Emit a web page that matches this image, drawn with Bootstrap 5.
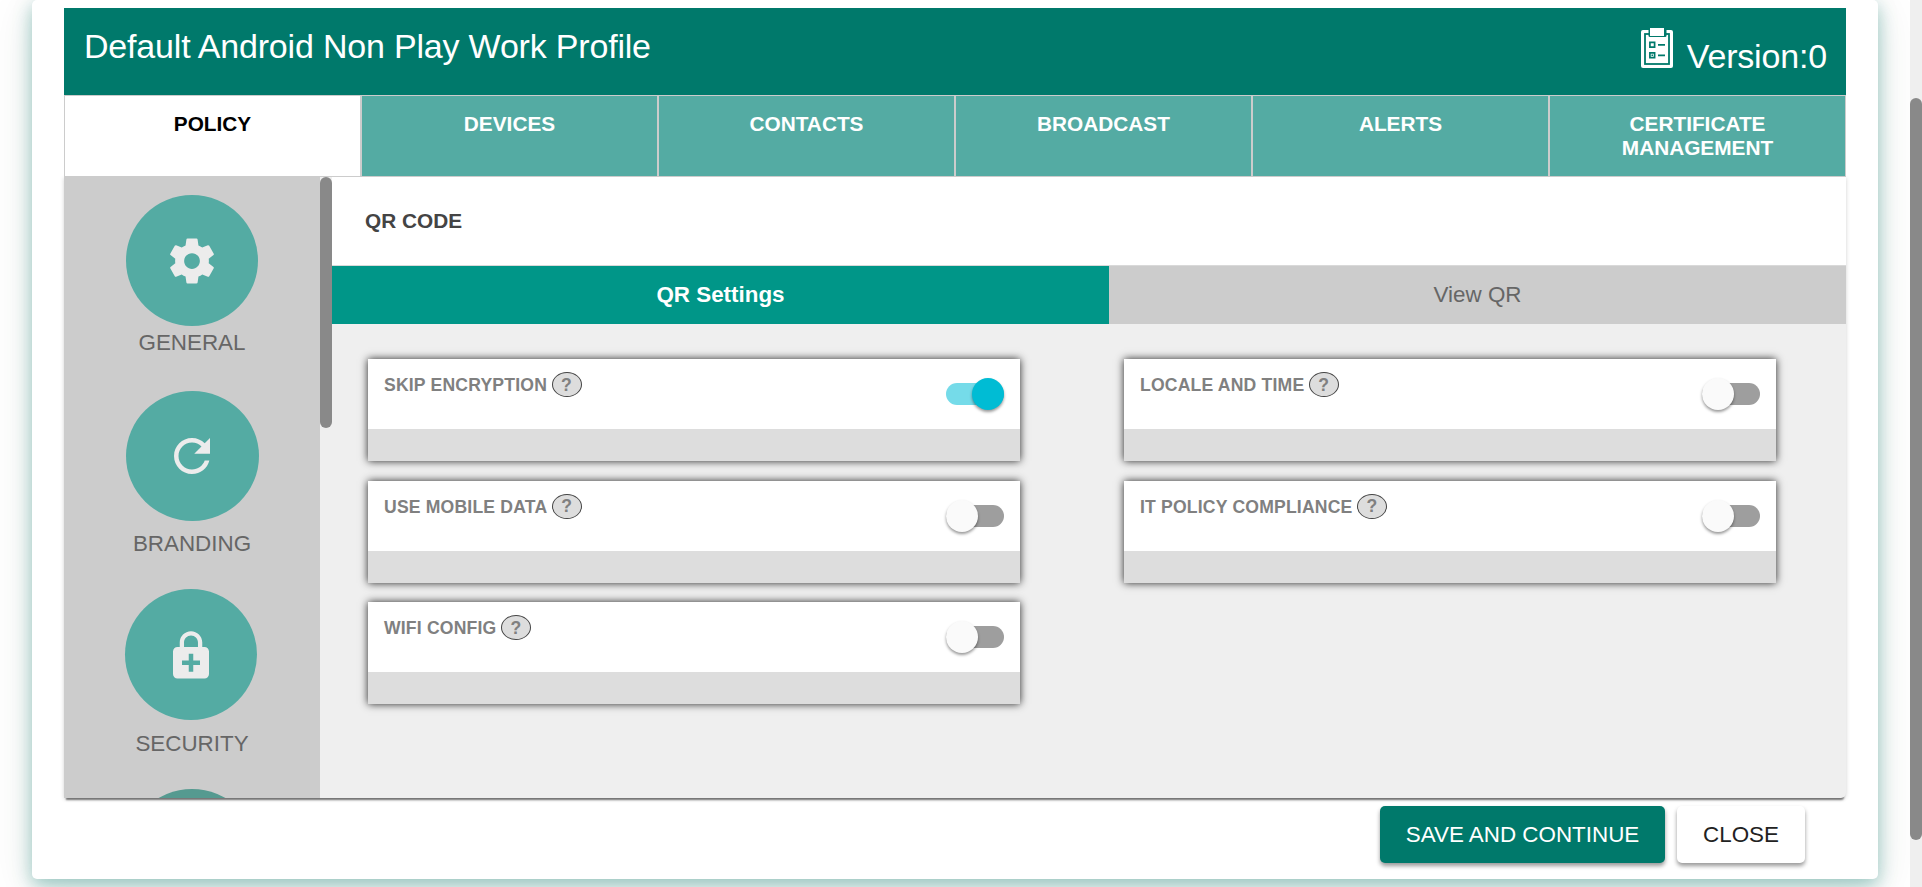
<!DOCTYPE html>
<html lang="en">
<head>
<meta charset="utf-8">
<title>Default Android Non Play Work Profile</title>
<link href="https://cdn.jsdelivr.net/npm/bootstrap@5.3.0/dist/css/bootstrap.min.css" rel="stylesheet">
<style>
body{font-family:"Liberation Sans",Arial,sans-serif;height:887px;overflow:hidden;background:#fff;color:#444}
.page-area{flex:1;height:887px;padding:0 32px;overflow:hidden}
.sheet{height:879px;padding:8px 32px 0;border-radius:5px;background:#fff;box-shadow:0 6px 18px rgba(0,121,107,.36),0 8px 44px rgba(0,60,50,.13)}
.title-bar{height:87px;background:#00796b;color:#fff;padding:0 19px 0 20px}
.title-bar h1{font-size:34px;line-height:40px;margin:18px 0 0;font-weight:400;letter-spacing:-.19px}
.version{font-size:34px;line-height:40px;margin-top:28px;letter-spacing:-.17px}
.clipboard{width:32px;height:41px;margin:19px 14px 0 0}
.main-tabs{height:82px}
.main-tabs .nav-link{flex:1 1 0;border:1px solid #ccc;border-radius:0;background:#54aba3;color:#fff;font-weight:700;font-size:20.8px;line-height:24px;padding:16px 40px 0;text-align:center}
.main-tabs .nav-link.active{background:#fff;color:#000}
.work{height:621px;border-radius:0 0 5px 0;box-shadow:0 4px 2px -2px rgba(0,0,0,.5),0 1px 4px rgba(0,0,0,.18);background:#efefef}
.side{width:256px;background:#ccc;overflow:hidden;padding-top:18px;color:#666;font-size:22.4px;line-height:26px}
.side-item{height:196px}
.side-item.branding{height:198px}
.side-item.security{height:200px}
.disc{width:132px;height:131px;border-radius:50%;background:#54aba3}
.branding .disc{width:133px;height:130px}
.disc svg{width:54px;height:54px;fill:#ececec}
.security .disc{margin-right:2px}
.security svg{margin-top:2px}
.disc.dim{background:#559a90}
.track{width:12px;background:#efefef}
.thumb{width:12px;border-radius:6px;background:#898989}
.heading{height:89px;border-bottom:1px solid #d9d9d9;background:#fff;padding:32px 0 0 33px;font-size:20.8px;line-height:24px;font-weight:700;margin:0}
.sub-tabs{height:58px;font-size:22.4px;background:#ccc;color:#666}
.sub-tabs .on{width:777px;background:#009688;color:#fff;font-weight:700}
.option-grid{padding:35px 70px 0 36px;display:grid;grid-template-columns:652px 652px;column-gap:104px;row-gap:19.5px}
.option{height:102px;background:#fff;box-shadow:0 0 8px rgba(0,0,0,.85);padding:14px 16px 0;border-bottom:32px solid #ddd}
.option h2{font-size:17.6px;line-height:24px;font-weight:700;color:#808080;margin:0;letter-spacing:.18px}
.help{width:30px;height:25px;border:1px solid #444;border-radius:50%;background:#ddd;margin:-1px 0 0 4.5px}
.switch{width:58px;height:32px;margin-top:5px}
.rail{width:58px;height:22px;border-radius:11px;background:#9e9e9e}
.knob{position:absolute;left:0;top:0;width:32px;height:32px;border-radius:50%;background:#fafafa;box-shadow:0 2px 3px rgba(0,0,0,.4)}
.switch.checked .rail{background:#75dbe9}
.switch.checked .knob{left:26px;background:#00bcd4}
.actions{padding:8px 41px 0 0;gap:12px}
.actions .btn{height:57px;border:0;border-radius:5px;font-size:22.4px;padding:0;box-shadow:0 3px 4px rgba(0,0,0,.4)}
.save{width:285px;background:#00796b!important;color:#fff!important}
.close-btn{width:128px;background:#fff;color:#222}
.page-track{width:12px;height:887px;background:#efefef;padding-top:98px}
</style>
</head>
<body class="d-flex">
<div class="page-area">
<main class="sheet">
<header class="title-bar d-flex justify-content-between">
<h1>Default Android Non Play Work Profile</h1>
<div class="d-flex">
<svg class="clipboard" viewBox="0 0 32 41"><rect x="0" y="3" width="32" height="38" rx="2" fill="#fff"/><rect x="4" y="7" width="24" height="30" fill="none" stroke="#00796b" stroke-width="1.8"/><rect x="7.500" y="0" width="18" height="10" rx="1.500" fill="#00796b"/><path fill="#fff" d="M9 1h14v8H9z"/><path fill="none" stroke="#00796b" stroke-width="1.700" d="M8.900 15.400h4.700v4.700H8.900zM8.900 25.900h4.700v4.700H8.900zM17 17.800h7M17 28.300h7"/><path fill="#00796b" d="M10.500 27.500h1.500v1.500h-1.500z"/></svg>
<span class="version">Version:0</span>
</div>
</header>
<nav class="nav main-tabs flex-nowrap">
<a class="nav-link active">POLICY</a><a class="nav-link">DEVICES</a><a class="nav-link">CONTACTS</a><a class="nav-link">BROADCAST</a><a class="nav-link">ALERTS</a><a class="nav-link">CERTIFICATE MANAGEMENT</a>
</nav>
<section class="work d-flex">
<aside class="side d-flex flex-column">
<div class="side-item d-flex flex-column align-items-center flex-shrink-0"><div class="disc d-flex align-items-center justify-content-center"><svg viewBox="0 0 24 24"><path d="M19.430 12.980c.04-.32.07-.64.07-.98s-.03-.66-.07-.98l2.110-1.650c.19-.15.24-.42.12-.64l-2-3.460c-.12-.22-.39-.3-.61-.22l-2.490 1c-.52-.4-1.080-.73-1.690-.98l-.38-2.650C14.460 2.180 14.250 2 14 2h-4c-.25 0-.46.18-.49.42l-.38 2.650c-.61.25-1.170.59-1.690.98l-2.490-1c-.23-.09-.49 0-.61.22l-2 3.460c-.13.22-.07.49.12.64l2.110 1.650c-.04.32-.07.65-.07.98s.03.66.07.98l-2.110 1.650c-.19.15-.24.42-.12.64l2 3.460c.12.22.39.3.61.22l2.490-1c.52.4 1.080.73 1.690.98l.38 2.650c.03.24.24.42.49.42h4c.25 0 .46-.18.49-.42l.38-2.650c.61-.25 1.170-.59 1.690-.98l2.490 1c.23.09.49 0 .61-.22l2-3.460c.12-.22.07-.49-.12-.64l-2.110-1.650zM12 15.500c-1.930 0-3.500-1.570-3.500-3.500s1.570-3.500 3.500-3.500 3.500 1.570 3.500 3.500-1.570 3.500-3.500 3.500z"/></svg></div><span class="mt-1">GENERAL</span></div>
<div class="side-item branding d-flex flex-column align-items-center flex-shrink-0"><div class="disc d-flex align-items-center justify-content-center"><svg viewBox="0 0 24 24"><path d="M17.650 6.350C16.200 4.900 14.210 4 12 4c-4.420 0-7.990 3.580-7.990 8s3.570 8 7.990 8c3.730 0 6.840-2.550 7.730-6h-2.080c-.82 2.330-3.040 4-5.650 4-3.310 0-6-2.690-6-6s2.690-6 6-6c1.660 0 3.140.69 4.220 1.780L13 11h7V4l-2.350 2.350z"/></svg></div><span style="margin-top:10px">BRANDING</span></div>
<div class="side-item security d-flex flex-column align-items-center flex-shrink-0"><div class="disc d-flex align-items-center justify-content-center"><svg viewBox="0 0 24 24"><path d="M18 8h-1V6c0-2.760-2.240-5-5-5S7 3.240 7 6v2H6c-1.100 0-2 .9-2 2v10c0 1.100.9 2 2 2h12c1.100 0 2-.9 2-2V10c0-1.100-.9-2-2-2zM8.900 6c0-1.710 1.390-3.100 3.100-3.100s3.100 1.390 3.100 3.100v2H8.900V6zM16 16h-3v3h-2v-3H8v-2h3v-3h2v3h3v2z"/></svg></div><span style="margin-top:11px">SECURITY</span></div>
<div class="side-item d-flex flex-column align-items-center flex-shrink-0"><div class="disc dim"></div></div>
</aside>
<div class="track"><div class="thumb" style="height:251px"></div></div>
<div class="flex-fill">
<h2 class="heading">QR CODE</h2>
<div class="sub-tabs d-flex text-center align-items-center">
<div class="on h-100 d-flex align-items-center justify-content-center">QR Settings</div><div class="flex-fill">View QR</div>
</div>
<div class="option-grid">
<div class="option d-flex justify-content-between"><h2 class="d-flex">SKIP ENCRYPTION <span class="help d-flex align-items-center justify-content-center">?</span></h2><div class="switch checked position-relative d-flex align-items-center"><div class="rail"></div><div class="knob"></div></div></div>
<div class="option d-flex justify-content-between"><h2 class="d-flex">LOCALE AND TIME <span class="help d-flex align-items-center justify-content-center">?</span></h2><div class="switch position-relative d-flex align-items-center"><div class="rail"></div><div class="knob"></div></div></div>
<div class="option d-flex justify-content-between"><h2 class="d-flex">USE MOBILE DATA <span class="help d-flex align-items-center justify-content-center">?</span></h2><div class="switch position-relative d-flex align-items-center"><div class="rail"></div><div class="knob"></div></div></div>
<div class="option d-flex justify-content-between"><h2 class="d-flex">IT POLICY COMPLIANCE <span class="help d-flex align-items-center justify-content-center">?</span></h2><div class="switch position-relative d-flex align-items-center"><div class="rail"></div><div class="knob"></div></div></div>
<div class="option d-flex justify-content-between"><h2 class="d-flex">WIFI CONFIG <span class="help d-flex align-items-center justify-content-center">?</span></h2><div class="switch position-relative d-flex align-items-center"><div class="rail"></div><div class="knob"></div></div></div>
</div>
</div>
</section>
<footer class="actions d-flex justify-content-end"><button class="btn save">SAVE AND CONTINUE</button><button class="btn close-btn">CLOSE</button></footer>
</main>
</div>
<div class="page-track"><div class="thumb" style="height:742px"></div></div>
<script src="https://cdn.jsdelivr.net/npm/bootstrap@5.3.0/dist/js/bootstrap.bundle.min.js"></script>
</body>
</html>
